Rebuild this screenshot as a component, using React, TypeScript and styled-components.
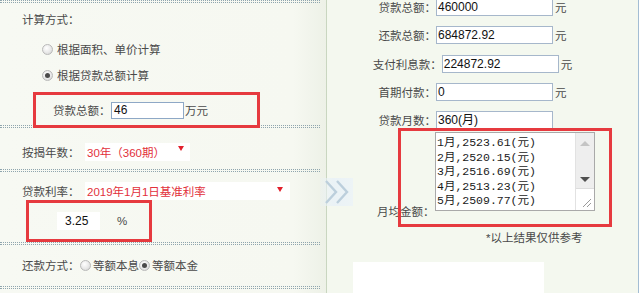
import * as React from 'react';
import styled, { createGlobalStyle, css } from 'styled-components';

const GlobalStyle = createGlobalStyle`
  html, body {
    margin: 0;
    padding: 0;
    background: #ffffff;
  }
  body {
    font-family: 'Liberation Sans', 'Noto Sans CJK SC', sans-serif;
    font-size: 11.5px;
    color: #4a4a4a;
    text-spacing-trim: space-all;
  }
`;

const Page = styled.div`
  position: relative;
  display: flex;
  width: 640px;
  height: 293px;
  overflow: hidden;
  background: #ffffff;
`;

/* ---------- left: input form ---------- */

const LeftPanel = styled.div`
  display: flex;
  flex-direction: column;
  width: 326px;
  height: 293px;
  padding-right: 6px;
  box-sizing: border-box;
  background: linear-gradient(to right, #f7f9f3 0%, #f6f8f1 90%, #edf1e7 100%);
`;

const Separator = styled.div<{ $offset?: number }>`
  height: 1px;
  margin-top: ${({ $offset }) => $offset ?? 0}px;
  border-top: 1px dotted #8fa5ae;
  border-bottom: 1px dotted #8fa5ae;
`;

const Section = styled.div`
  display: flex;
  flex-direction: column;
  padding-left: 22px;
`;

const Line = styled.div<{ $top: number; $indent?: number }>`
  display: flex;
  align-items: center;
  height: 20px;
  margin-top: ${({ $top }) => $top}px;
  padding-left: ${({ $indent }) => $indent ?? 0}px;
  white-space: nowrap;
`;

const FieldLabel = styled.span<{ $width?: number }>`
  flex: none;
  width: ${({ $width }) => ($width ? `${$width}px` : 'auto')};
  color: #4a4a4a;
`;

const Radio = styled.span<{ $checked?: boolean; $size?: number }>(
  ({ $checked, $size = 11 }) => css`
    position: relative;
    flex: none;
    width: ${$size}px;
    height: ${$size}px;
    box-sizing: border-box;
    border-radius: 50%;
    border: 1px solid #b9b9b9;
    background: radial-gradient(circle at 40% 35%, #ffffff 0%, #e8e8e8 55%, #cfcfcf 100%);

    ${$checked &&
    css`
      &::after {
        content: '';
        position: absolute;
        inset: 0;
        margin: auto;
        width: 5px;
        height: 5px;
        border-radius: 50%;
        background: #4a4a4a;
      }
    `}
  `,
);

const RadioText = styled.span<{ $gap?: number }>`
  margin-left: ${({ $gap }) => $gap ?? 4}px;
  color: #4a4a4a;
`;

/* annotation frame drawn over the content it wraps */
const Marked = styled.div<{ $left: number; $top: number; $width: number; $height: number }>(
  ({ $left, $top, $width, $height }) => css`
    position: relative;
    flex: none;
    margin-left: ${$left}px;
    margin-top: ${$top}px;
    width: ${$width}px;
    height: ${$height}px;
    box-sizing: border-box;

    &::after {
      content: '';
      position: absolute;
      inset: 0;
      border: 3px solid #e63a3f;
      z-index: 2;
      pointer-events: none;
    }
  `,
);

const MarkedRow = styled.div<{ $pad: number }>`
  display: flex;
  align-items: center;
  height: 100%;
  padding-left: ${({ $pad }) => $pad}px;
  white-space: nowrap;
`;

const SmallInput = styled.div`
  width: 73px;
  height: 17px;
  box-sizing: border-box;
  border: 1px solid #8ea8c6;
  background: #ffffff;
  padding-left: 2px;
  font-size: 12px;
  line-height: 15px;
  color: #111111;
`;

const RateInput = styled.div`
  width: 43px;
  height: 18px;
  box-sizing: border-box;
  padding-left: 8px;
  background: #ffffff;
  font-size: 12px;
  line-height: 18px;
  color: #111111;
`;

const Unit = styled.span<{ $gap?: number; $hidden?: boolean }>`
  margin-left: ${({ $gap }) => $gap ?? 1}px;
  color: #4a4a4a;
  visibility: ${({ $hidden }) => ($hidden ? 'hidden' : 'visible')};
`;

const Select = styled.div<{ $width: number; $padRight: number; $drop: number }>`
  display: flex;
  justify-content: space-between;
  align-items: center;
  width: ${({ $width }) => $width}px;
  height: 18px;
  padding: 0 ${({ $padRight }) => $padRight}px 0 2px;
  box-sizing: border-box;
  background: #ffffff;
  color: #e2303a;

  & > i {
    flex: none;
    margin-top: ${({ $drop }) => $drop}px;
    width: 0;
    height: 0;
    border-left: 3px solid transparent;
    border-right: 3px solid transparent;
    border-top: 5px solid #e2202c;
  }
`;

/* ---------- right: results ---------- */

const RightPanel = styled.div`
  display: flex;
  flex-direction: column;
  width: 313px;
  height: 293px;
  box-sizing: border-box;
  padding-right: 20px;
  border-left: 1px solid #c9d6c0;
  border-right: 1px solid #a3bdd4;
  background: #f4f8ef;
`;

const Rows = styled.div`
  display: flex;
  flex-direction: column;
  gap: 10.3px;
  margin-top: -2px;
`;

const ResultRow = styled.div`
  display: flex;
  align-items: center;
  justify-content: center;
  height: 18px;
  white-space: nowrap;
`;

const ResultInput = styled.div`
  width: 117px;
  height: 18px;
  box-sizing: border-box;
  border: 1px solid #a6b7cb;
  background: #ffffff;
  padding-left: 1px;
  font-size: 12px;
  line-height: 16px;
  color: #111111;
`;

const ScheduleRow = styled.div`
  display: flex;
  align-items: flex-end;
  margin-left: -21px;
  padding-top: 4px;
`;

const ScheduleLabel = styled.span`
  width: 58px;
  margin-bottom: -8px;
  color: #4a4a4a;
  white-space: nowrap;
`;

const Schedule = styled.div`
  display: flex;
  width: 160px;
  height: 79px;
  box-sizing: border-box;
  border: 1px solid #a9a9a9;
  background: #ffffff;
`;

const ScheduleLines = styled.div`
  flex: 1;
  overflow: hidden;
  padding: 3px 0 0 1px;
  font-family: 'Liberation Mono', 'Noto Sans CJK SC', monospace;
  font-size: 11.5px;
  line-height: 14.5px;
  color: #1a1a1a;
  white-space: pre;
`;

const ScrollBar = styled.div`
  display: flex;
  flex-direction: column;
  width: 18px;
  border-left: 1px solid #e2e2e2;
`;

const ScrollTrack = styled.div`
  display: flex;
  flex-direction: column;
  justify-content: space-between;
  align-items: center;
  height: 56px;
  padding: 8px 0 6px;
  box-sizing: border-box;
  background: #eeeeee;
  border-bottom: 1px solid #dddddd;
`;

const Arrow = styled.i<{ $up?: boolean; $color: string }>`
  width: 0;
  height: 0;
  border-left: 5px solid transparent;
  border-right: 5px solid transparent;
  ${({ $up, $color }) =>
    $up ? `border-bottom: 5px solid ${$color};` : `border-top: 5px solid ${$color};`}
`;

const Grip = styled.div`
  display: flex;
  flex: 1;
  justify-content: flex-end;
  align-items: flex-end;
  padding: 0 2px 2px 0;
`;

const Note = styled.div`
  margin: 1px 0 0 159px;
  line-height: 20px;
  color: #4a4a4a;
  white-space: nowrap;
`;

const BlankBox = styled.div`
  width: 191px;
  height: 40px;
  margin: 14px 0 0 26px;
  background: #ffffff;
`;

const Chevrons = styled.div`
  position: absolute;
  left: 320px;
  top: 178px;
  width: 33px;
  height: 28px;
  background: linear-gradient(to right, rgba(232, 241, 246, 0.2), #eaf2f6 40%, #edf4f6);
`;

const schedule = [
  '1月,2523.61(元)',
  '2月,2520.15(元)',
  '3月,2516.69(元)',
  '4月,2513.23(元)',
  '5月,2509.77(元)',
];

const results = [
  { label: '贷款总额：', value: '460000', unit: true },
  { label: '还款总额：', value: '684872.92', unit: true },
  { label: '支付利息款：', value: '224872.92', unit: true },
  { label: '首期付款：', value: '0', unit: true },
  { label: '贷款月数：', value: '360(月)', unit: false },
];

const App = () => (
  <>
    <GlobalStyle />
    <Page>
      <LeftPanel>
        <Separator />
        <Section>
          <Line $top={6}>
            <FieldLabel>计算方式：</FieldLabel>
          </Line>
          <Line $top={10} $indent={20}>
            <Radio />
            <RadioText>根据面积、单价计算</RadioText>
          </Line>
          <Line $top={6} $indent={20}>
            <Radio $checked />
            <RadioText>根据贷款总额计算</RadioText>
          </Line>
          <Marked $left={11} $top={7} $width={227} $height={36}>
            <MarkedRow $pad={20}>
              <FieldLabel $width={58}>贷款总额：</FieldLabel>
              <SmallInput>46</SmallInput>
              <Unit>万元</Unit>
            </MarkedRow>
          </Marked>
        </Section>
        <Separator $offset={-3} />
        <Section>
          <Line $top={14}>
            <FieldLabel $width={63}>按揭年数：</FieldLabel>
            <Select $width={105} $padRight={6} $drop={-8}>
              <span>30年（360期）</span>
              <i />
            </Select>
          </Line>
        </Section>
        <Separator $offset={7} />
        <Section>
          <Line $top={9}>
            <FieldLabel $width={63}>贷款利率：</FieldLabel>
            <Select $width={205} $padRight={7} $drop={-4}>
              <span>2019年1月1日基准利率</span>
              <i />
            </Select>
          </Line>
          <Marked $left={4} $top={-1} $width={126} $height={42}>
            <MarkedRow $pad={31}>
              <RateInput>3.25</RateInput>
              <Unit $gap={17}>%</Unit>
            </MarkedRow>
          </Marked>
        </Section>
        <Separator />
        <Section>
          <Line $top={10}>
            <FieldLabel $width={58}>还款方式：</FieldLabel>
            <Radio $size={11} />
            <RadioText $gap={2}>等额本息</RadioText>
            <Radio $size={11} $checked />
            <RadioText $gap={2}>等额本金</RadioText>
          </Line>
        </Section>
        <Separator $offset={11} />
      </LeftPanel>

      <RightPanel>
        <Rows>
          {results.map((r) => (
            <ResultRow key={r.label}>
              <FieldLabel>{r.label}</FieldLabel>
              <ResultInput>{r.value}</ResultInput>
              <Unit $gap={2} $hidden={!r.unit}>
                元
              </Unit>
            </ResultRow>
          ))}
        </Rows>
        <Marked $left={71} $top={-1} $width={214} $height={99}>
          <ScheduleRow>
            <ScheduleLabel>月均金额：</ScheduleLabel>
            <Schedule>
              <ScheduleLines>{schedule.join('\n')}</ScheduleLines>
              <ScrollBar>
                <ScrollTrack>
                  <Arrow $up $color="#c4c4c4" />
                  <Arrow $color="#505050" />
                </ScrollTrack>
                <Grip>
                  <svg width="11" height="11" viewBox="0 0 11 11">
                    <path d="M10 2 L2 10 M10 6 L6 10" stroke="#9a9a9a" strokeWidth="1" fill="none" />
                  </svg>
                </Grip>
              </ScrollBar>
            </Schedule>
          </ScheduleRow>
        </Marked>
        <Note>*以上结果仅供参考</Note>
        <BlankBox />
      </RightPanel>

      <Chevrons>
        <svg width="33" height="28" viewBox="0 0 33 28">
          <path d="M6 3 L16 14 L6 25" stroke="#bccfdc" strokeWidth="2.4" fill="none" />
          <path d="M17 3 L27 14 L17 25" stroke="#bccfdc" strokeWidth="2.4" fill="none" />
        </svg>
      </Chevrons>
    </Page>
  </>
);

export default App;
